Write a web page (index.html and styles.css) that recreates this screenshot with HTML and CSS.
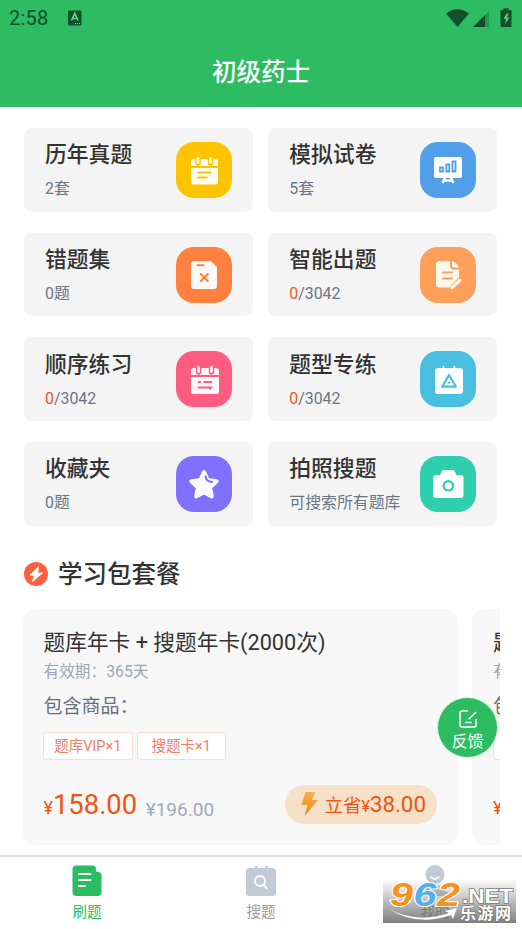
FILE: index.html
```html
<!DOCTYPE html>
<html lang="zh-CN">
<head>
<meta charset="utf-8">
<title>初级药士</title>
<link rel="stylesheet" href="styles.css">
</head>
<body>
<div class="app">
  <header class="header">
    <div class="status">
      <span class="clock">2:58</span>
      <svg class="ime" width="14" height="16" viewBox="0 0 14 16"><rect y=".5" width="13.5" height="15" rx="1.5" fill="#115028"/><path d="M3.5 10.5 6.8 3.5l3.3 7M4.7 8.5h4.2" fill="none" stroke="#70cf91" stroke-width="1.6"/><path d="M7 13.5h6" stroke="#70cf91" stroke-dasharray="1 1"/></svg>
      <svg class="signals" width="66" height="20" viewBox="0 0 66 20"><path d="M0 5.5Q11.5-3 23 5.5L11.5 19Z" fill="#115028"/><path d="M27 19 43 3v16Z" fill="#239950"/><path d="M27 19 39 7V19Z" fill="#115028"/><path d="M54.500 2h3V.3h5V2h3v17h-11Z" fill="#115028"/><path d="M60.500 5.500 57.500 11H60L59 16l4.500-6.500H61l1.500-4Z" fill="#5cc785"/></svg>
    </div>
    <h1>初级药士</h1>
  </header>
  <main class="content">
    <section class="grid">
      <div class="card"><div><h2>历年真题</h2><p>2套</p></div>
        <svg class="icon yellow" viewBox="0 0 56 56"><path d="M15 24v-4a3 3 0 0 1 3-3h21a3 3 0 0 1 3 3v4ZM15 26h27v14a2.500 2.500 0 0 1-2.500 2.500h-22A2.500 2.500 0 0 1 15 40Z" fill="#fffdf2"/><path d="M22 17v4M34.500 17v4" stroke="#ffc400" stroke-width="5.500" stroke-linecap="round"/><path d="M22 16.500v4M34.500 16.500v4" stroke="#fffdf2" stroke-width="2.800" stroke-linecap="round"/><path d="M22 30.500h12.500M22 35.500h9" stroke="#ffc400" stroke-width="1.900" stroke-linecap="round"/></svg></div>
      <div class="card"><div><h2>模拟试卷</h2><p>5套</p></div>
        <svg class="icon blue" viewBox="0 0 56 56"><rect x="14" y="15" width="28" height="21" rx="2" fill="#fff"/><path d="M25 35.500 22.500 41M31 35.500l2.500 5.500M23.500 38.500h9" stroke="#fff" stroke-width="2.300"/><path d="M20 25.500h3v4h-3ZM26.300 22.500h3v7h-3ZM32.500 19.500h3v10h-3Z" fill="#fff" stroke="#519fe8" stroke-width="1.800"/></svg></div>
      <div class="card"><div><h2>错题集</h2><p>0题</p></div>
        <svg class="icon orange" viewBox="0 0 56 56"><path d="M18 14h17l6 6v19a3 3 0 0 1-3 3H18a3 3 0 0 1-3-3V17a3 3 0 0 1 3-3Z" fill="#fffaf5"/><path d="M21.500 18.200h6" stroke="#ff803f" stroke-width="2" stroke-linecap="round"/><path d="m24.800 27 7 7m0-7-7 7" stroke="#ff803f" stroke-width="2" stroke-linecap="round"/></svg></div>
      <div class="card"><div><h2>智能出题</h2><p><b>0</b>/3042</p></div>
        <svg class="icon peach" viewBox="0 0 56 56"><path d="M20 14h10v4.500a4 4 0 0 0 4 4h5V30L29 40.500H20a4 4 0 0 1-4-4V18a4 4 0 0 1 4-4Z" fill="#fff8ee"/><path d="M32 14.200q2 0 3.500 1.500l2 2q1.200 1.200 1.200 2.800H34a2 2 0 0 1-2-2Z" fill="#fff8ee"/><path d="M23 25.500h9M23 31.500h9" stroke="#ffa05a" stroke-width="1.900" stroke-linecap="round"/><path d="m32 40.500 7.500-7" stroke="#fff8ee" stroke-width="3.600" stroke-linecap="round"/></svg></div>
      <div class="card"><div><h2>顺序练习</h2><p><b>0</b>/3042</p></div>
        <svg class="icon pink" viewBox="0 0 56 56"><path d="M15 24v-4a3 3 0 0 1 3-3h22a3 3 0 0 1 3 3v4ZM15 26h28v14.500a2.500 2.500 0 0 1-2.500 2.500h-23a2.500 2.500 0 0 1-2.500-2.500Z" fill="#fff7f9"/><path d="M22.500 17v4M35.500 17v4" stroke="#ff5c7f" stroke-width="5.500" stroke-linecap="round"/><path d="M22.500 16.500v4M35.500 16.500v4" stroke="#fff7f9" stroke-width="2.800" stroke-linecap="round"/><path d="M22 31h3M27.500 31h8.500M22 36.500h13l-1.500 2" fill="none" stroke="#ff5c7f" stroke-width="1.900"/></svg></div>
      <div class="card"><div><h2>题型专练</h2><p><b>0</b>/3042</p></div>
        <svg class="icon cyan" viewBox="0 0 56 56"><rect x="15" y="17" width="28" height="26" rx="3" fill="#fbffff"/><path d="M23.500 15v3M34.500 15v3" stroke="#fbffff" stroke-width="1.600"/><path d="M29 24 35.800 35.700H22.200Z" fill="none" stroke="#48bee1" stroke-width="2.200" stroke-linejoin="round"/><circle cx="29" cy="31.800" r="1.100" fill="#48bee1"/></svg></div>
      <div class="card"><div><h2>收藏夹</h2><p>0题</p></div>
        <svg class="icon violet" viewBox="0 0 56 56"><path d="m28 16 3.700 8 9 1.200-6.500 6.300 1.600 9-7.800-4.200-7.800 4.200 1.600-9-6.500-6.300 9-1.200Z" fill="#fafaff" stroke="#fafaff" stroke-width="4" stroke-linejoin="round"/><path d="M29.500 20.500Q30 25.500 36 26" fill="none" stroke="#7f70ff" stroke-width="2.200" stroke-linecap="round"/></svg></div>
      <div class="card"><div><h2>拍照搜题</h2><p>可搜索所有题库</p></div>
        <svg class="icon teal" viewBox="0 0 56 56"><path d="M16 19h4l2-4q.5-1 1.500-1h9.500q1 0 1.500 1l2 4h4a3 3 0 0 1 3 3v17a3 3 0 0 1-3 3H16a3 3 0 0 1-3-3V22a3 3 0 0 1 3-3Z" fill="#fff"/><circle cx="28.300" cy="29.800" r="4.700" fill="none" stroke="#2ecfad" stroke-width="2.200"/></svg></div>
    </section>
    <div class="section-title">
      <svg width="24" height="24" viewBox="0 0 24 24"><circle cx="12" cy="12" r="12" fill="#ff5f3e"/><path d="M14.500 5 6 13.200h4.500L8.500 19.500 18.500 11h-5Z" fill="#fff" stroke="#fff" stroke-linejoin="round"/></svg>
      <h2>学习包套餐</h2>
    </div>
    <section class="packs">
      <article class="pack">
        <h3>题库年卡 + 搜题年卡(2000次)</h3>
        <p class="valid">有效期：365天</p>
        <p class="include">包含商品：</p>
        <div class="tags"><span>题库VIP×1</span><span>搜题卡×1</span></div>
        <div class="price-row">
          <span class="price"><small>¥</small>158.00</span><span class="was">¥196.00</span>
          <span class="save"><svg width="20" height="26" viewBox="0 0 20 26"><defs><linearGradient id="bolt" x2="0" y2="1"><stop stop-color="#f3b04b"/><stop offset="1" stop-color="#ed8617"/></linearGradient></defs><path d="M5.500 1H15l-3 8H18L4.500 25 7.500 14H1.500Z" fill="url(#bolt)"/></svg><span>立省<small>¥</small><em>38.00</em></span></span>
        </div>
      </article>
      <article class="pack">
        <h3>题</h3>
        <p class="valid">有</p>
        <p class="include">包</p>
        <div class="tags"><span></span></div>
        <div class="price-row"><span class="price"><small>¥</small></span></div>
      </article>
    </section>
  </main>
  <nav class="tabs">
    <div class="tab active"><svg width="30" height="32" viewBox="0 0 30 32"><path d="M4.500 .5h16q3.500 0 3.500 3.500v1q0 2 2 2 3.500 0 3.500 3.500v16.500a4 4 0 0 1-4 4h-21a4 4 0 0 1-4-4v-22.500a4 4 0 0 1 4-4Z" fill="#2dbc62"/><path d="M7 9h11.500M7 15h11.500M7 21h6" stroke="#fff" stroke-width="2.200" stroke-linecap="round"/></svg><span>刷题</span></div>
    <div class="tab"><svg width="30" height="32" viewBox="0 0 30 32"><rect y="3" width="30" height="28" rx="3.500" fill="#c2cad6"/><path d="M10.500 1v5M20.500 1v5" stroke="#c2cad6" stroke-width="2.500"/><circle cx="14" cy="16" r="5" fill="none" stroke="#fff" stroke-width="2"/><path d="m17.500 20 3 3" stroke="#fff" stroke-width="2" stroke-linecap="round"/></svg><span>搜题</span></div>
    <div class="tab"><svg width="30" height="32" viewBox="0 0 30 32"><circle cx="15" cy="9.500" r="9.500" fill="#c2cad6"/><path d="M10.500 11.500q4.500 5 9 0" fill="none" stroke="#fff" stroke-width="1.800"/><path d="M2 31q0-11 13-11t13 11Z" fill="#c2cad6"/></svg><span>我的</span></div>
  </nav>
  <div class="feedback"><svg width="20" height="20" viewBox="0 0 20 20"><path d="M10 2H4Q2 2 2 4v12q0 2 2 2h12q2 0 2-2v-6M10.500 10.500 18 3M7 13.500h6.500" fill="none" stroke="#fff" stroke-width="1.500"/></svg><span>反馈</span></div>
  <div class="watermark">
    <svg width="133" height="44" viewBox="0 0 133 44">
      <g class="digits"><text x="7" y="27" fill="#f7931d" textLength="23" lengthAdjust="spacingAndGlyphs">9</text><text x="30.500" y="27" fill="#58aee8" textLength="23" lengthAdjust="spacingAndGlyphs">6</text><text x="54" y="27" fill="#f7931d" textLength="23" lengthAdjust="spacingAndGlyphs">2</text></g>
      <path d="M6 30Q34 45 66 34l-4-2 12-3-4 11-2-4Q34 48 6 30Z" fill="#fff"/>
      <text class="net" x="79" y="24" textLength="51" lengthAdjust="spacingAndGlyphs">.NET</text>
      <text class="site" x="77" y="40" textLength="51">乐游网</text>
    </svg>
  </div>
</div>
</body>
</html>
```
FILE: styles.css
```css
* { box-sizing: border-box; margin: 0; padding: 0; }
body { background: #fff; font-family: Roboto, "Noto Sans CJK SC", sans-serif; color: #333; }
svg { display: block; flex: none; }
.app { position: relative; width: 522px; height: 929px; overflow: hidden; display: flex; flex-direction: column; }
.header { height: 107px; flex: none; background: #2dbc62; }
.status { height: 36px; padding: 0 10px 0 9px; display: flex; align-items: center; }
.clock { width: 59px; font-size: 20px; color: #115028; letter-spacing: .2px; }
.signals { margin-left: auto; }
.header h1 { height: 71px; line-height: 73px; text-align: center; font-size: 24.500px; font-weight: 500; color: #fff; }
.content { flex: 1; min-height: 0; padding: 21px 22px 0 23.500px; }
.grid { display: grid; grid-template-columns: 1fr 1fr; grid-auto-rows: 83.700px; gap: 21px 15px; margin-right: 3px; }
.card { background: #f4f4f4; border-radius: 8px; padding: 0 21px; display: flex; justify-content: space-between; align-items: center; }
.card h2 { font-size: 21.800px; line-height: 30px; font-weight: 500; white-space: nowrap; margin-bottom: 7px; margin-top: 2px; }
.card p { font-size: 15.900px; line-height: 24px; color: #6b7787; white-space: nowrap; }
.card b { font-weight: 400; color: #f2561b; }
.card > div { width: 0; margin-left: .5px; }
.icon { width: 56px; height: 56px; border-radius: 18px; }
.yellow { background: #ffc400; }
.blue { background: #519fe8; }
.orange { background: #ff803f; }
.peach { background: #ffa05a; }
.pink { background: #ff5c7f; }
.cyan { background: #48bee1; }
.violet { background: #7f70ff; }
.teal { background: #2ecfad; }
.section-title { height: 83px; padding-top: 13px; display: flex; align-items: center; gap: 10.500px; }
.section-title h2 { font-size: 24.500px; line-height: 36px; font-weight: 500; padding-top: 2px; }
.packs { display: flex; gap: 14.500px; overflow: hidden; margin-left: -1px; }
.pack { flex: none; width: 435px; height: 236px; padding: 19px 21px 0; background: #f7f7f7; border-radius: 13px; display: flex; flex-direction: column; }
.pack h3 { font-size: 21.700px; line-height: 30px; font-weight: 400; }
.valid { font-size: 15.700px; line-height: 28px; color: #9aa6b8; }
.include { font-size: 19px; line-height: 28px; margin-top: 7px; color: #65707f; }
.tags { display: flex; gap: 4px; margin-top: 11px; margin-left: -.5px; }
.tags span { width: 89.500px; height: 28px; line-height: 27px; text-align: center; font-size: 14.500px; color: #f07e66; background: #fff; border: 1px solid #fcdcd5; border-radius: 3px; }
.price-row { display: flex; margin-top: 25px; height: 39px; line-height: 39px; }
.price { font-size: 27.400px; line-height: 40px; color: #ef5410; }
.price small { font-size: 18px; }
.was { margin-left: 8.500px; font-size: 19px; line-height: 49px; color: #a2aab9; }
.save { margin-left: auto; width: 152px; height: 39px; border-radius: 20px; background: #f5e0c8; color: #ef5410; font-size: 18.500px; display: flex; align-items: center; padding-left: 15px; }
.save svg { margin-right: 5px; }
.save > span { padding-top: 2px; }
.save small { font-size: 16px; }
.save em { font-style: normal; font-size: 22.300px; }
.tabs { height: 74px; flex: none; border-top: 2px solid #dcdcdc; background: #fff; display: flex; }
.tab { flex: 1; display: flex; flex-direction: column; align-items: center; padding-top: 8px; font-size: 14.500px; line-height: 20px; color: #9b9b9b; }
.tab span { margin-top: 6px; }
.tab.active { color: #2dbc62; }
.feedback { position: absolute; left: 437px; top: 697px; width: 61px; height: 61px; border: 1px solid #d3fae2; border-radius: 50%; background: #2dbc62; color: #fff; display: flex; flex-direction: column; align-items: center; padding-top: 11px; font-size: 16px; line-height: 25px; }
.watermark { position: absolute; left: 383px; top: 879px; width: 133px; height: 44px; background: linear-gradient(rgba(255,255,255,0), rgba(105,105,105,.85)); }
.digits { font: italic 700 33px "Liberation Sans", sans-serif; stroke: #fff; stroke-width: 2px; paint-order: stroke; }
.net, .site { fill: #fff; stroke: #777; stroke-width: 1.500px; paint-order: stroke; }
.net { font: 700 21px "Liberation Sans", sans-serif; }
.site { font: 700 16px "Noto Sans CJK SC", sans-serif; }
```
